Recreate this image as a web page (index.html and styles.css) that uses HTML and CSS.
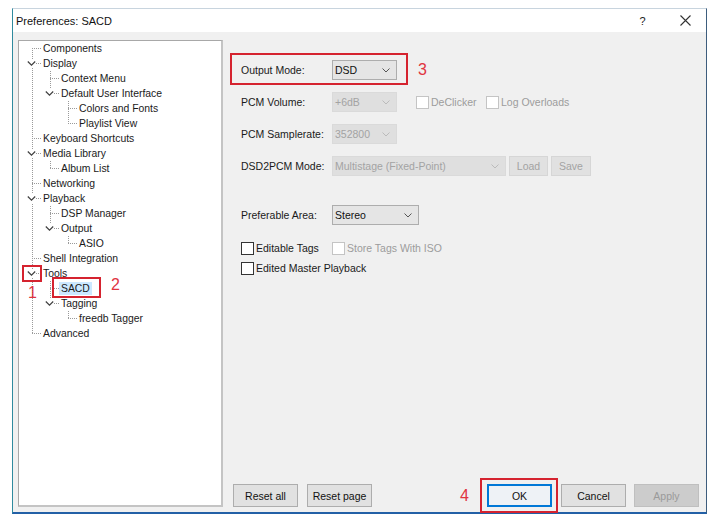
FILE: index.html
```html
<!DOCTYPE html>
<html>
<head>
<meta charset="utf-8">
<link rel="stylesheet" href="styles.css">
</head>
<body>
<div class="window">
  <div class="titlebar">
    <span class="title">Preferences: SACD</span>
    <span class="tb help">?</span>
    <span class="tb close"><svg width="11" height="11" viewBox="0 0 11 11"><path d="M0.5 0.5 L10.5 10.5 M10.5 0.5 L0.5 10.5" stroke="#333" stroke-width="1.1" fill="none"/></svg></span>
  </div>
  <div class="client">
    <div class="tree">
      <svg class="lines" width="203" height="465" viewBox="0 0 203 465">
        <g stroke="#9a9a9a" stroke-width="1" stroke-dasharray="1 1" fill="none">
          <path d="M13.5 7 V293"/>
          <path d="M13 7.5 H22 M13 22.5 H22 M13 97.5 H22 M13 112.5 H22 M13 142.5 H22 M13 157.5 H22 M13 217.5 H22 M13 232.5 H22 M13 292.5 H22"/>
          <path d="M31.5 30 V53 M31.5 120 V128 M31.5 165 V188 M31.5 240 V263"/>
          <path d="M31 37.5 H40 M31 52.5 H40 M31 127.5 H40 M31 172.5 H40 M31 187.5 H40 M31 247.5 H40 M31 262.5 H40"/>
          <path d="M49.5 60 V83 M49.5 195 V203 M49.5 270 V278"/>
          <path d="M49 67.5 H58 M49 82.5 H58 M49 202.5 H58 M49 277.5 H58"/>
        </g>
      </svg>
      <div class="row l0"><span class="exp"></span><span class="lbl">Components</span></div>
      <div class="row l0"><span class="exp"><svg class="chev" width="9" height="9" viewBox="0 0 9 9"><rect width="9" height="9" fill="#fff"/><polyline points="0.8,2.5 4.5,6.2 8.2,2.5" stroke="#404040" stroke-width="1.2" fill="none"/></svg></span><span class="lbl">Display</span></div>
      <div class="row l1"><span class="exp"></span><span class="lbl">Context Menu</span></div>
      <div class="row l1"><span class="exp"><svg class="chev" width="9" height="9" viewBox="0 0 9 9"><rect width="9" height="9" fill="#fff"/><polyline points="0.8,2.5 4.5,6.2 8.2,2.5" stroke="#404040" stroke-width="1.2" fill="none"/></svg></span><span class="lbl">Default User Interface</span></div>
      <div class="row l2"><span class="exp"></span><span class="lbl">Colors and Fonts</span></div>
      <div class="row l2"><span class="exp"></span><span class="lbl">Playlist View</span></div>
      <div class="row l0"><span class="exp"></span><span class="lbl">Keyboard Shortcuts</span></div>
      <div class="row l0"><span class="exp"><svg class="chev" width="9" height="9" viewBox="0 0 9 9"><rect width="9" height="9" fill="#fff"/><polyline points="0.8,2.5 4.5,6.2 8.2,2.5" stroke="#404040" stroke-width="1.2" fill="none"/></svg></span><span class="lbl">Media Library</span></div>
      <div class="row l1"><span class="exp"></span><span class="lbl">Album List</span></div>
      <div class="row l0"><span class="exp"></span><span class="lbl">Networking</span></div>
      <div class="row l0"><span class="exp"><svg class="chev" width="9" height="9" viewBox="0 0 9 9"><rect width="9" height="9" fill="#fff"/><polyline points="0.8,2.5 4.5,6.2 8.2,2.5" stroke="#404040" stroke-width="1.2" fill="none"/></svg></span><span class="lbl">Playback</span></div>
      <div class="row l1"><span class="exp"></span><span class="lbl">DSP Manager</span></div>
      <div class="row l1"><span class="exp"><svg class="chev" width="9" height="9" viewBox="0 0 9 9"><rect width="9" height="9" fill="#fff"/><polyline points="0.8,2.5 4.5,6.2 8.2,2.5" stroke="#404040" stroke-width="1.2" fill="none"/></svg></span><span class="lbl">Output</span></div>
      <div class="row l2"><span class="exp"></span><span class="lbl">ASIO</span></div>
      <div class="row l0"><span class="exp"></span><span class="lbl">Shell Integration</span></div>
      <div class="row l0"><span class="exp"><svg class="chev" width="9" height="9" viewBox="0 0 9 9"><rect width="9" height="9" fill="#fff"/><polyline points="0.8,2.5 4.5,6.2 8.2,2.5" stroke="#404040" stroke-width="1.2" fill="none"/></svg></span><span class="lbl">Tools</span></div>
      <div class="row l1"><span class="exp"></span><span class="lbl sel">SACD</span></div>
      <div class="row l1"><span class="exp"><svg class="chev" width="9" height="9" viewBox="0 0 9 9"><rect width="9" height="9" fill="#fff"/><polyline points="0.8,2.5 4.5,6.2 8.2,2.5" stroke="#404040" stroke-width="1.2" fill="none"/></svg></span><span class="lbl">Tagging</span></div>
      <div class="row l2"><span class="exp"></span><span class="lbl">freedb Tagger</span></div>
      <div class="row l0"><span class="exp"></span><span class="lbl">Advanced</span></div>
    </div>
    <div class="panel">
      <div class="form">
        <div class="frow r1">
          <span class="flabel">Output Mode:</span>
          <div class="combo w65"><span>DSD</span><svg width="8" height="5" viewBox="0 0 8 5"><polyline points="0.5,0.5 4,4 7.5,0.5" stroke="#555" stroke-width="1" fill="none"/></svg></div>
        </div>
        <div class="frow r2">
          <span class="flabel">PCM Volume:</span>
          <div class="combo w65 dis"><span>+6dB</span><svg width="8" height="5" viewBox="0 0 8 5"><polyline points="0.5,0.5 4,4 7.5,0.5" stroke="#bbb" stroke-width="1" fill="none"/></svg></div>
          <label class="chk dis g1"><span class="box"></span><span>DeClicker</span></label>
          <label class="chk dis"><span class="box"></span><span>Log Overloads</span></label>
        </div>
        <div class="frow r3">
          <span class="flabel">PCM Samplerate:</span>
          <div class="combo w65 dis"><span>352800</span><svg width="8" height="5" viewBox="0 0 8 5"><polyline points="0.5,0.5 4,4 7.5,0.5" stroke="#bbb" stroke-width="1" fill="none"/></svg></div>
        </div>
        <div class="frow r4">
          <span class="flabel">DSD2PCM Mode:</span>
          <div class="combo w174 dis"><span>Multistage (Fixed-Point)</span><svg width="8" height="5" viewBox="0 0 8 5"><polyline points="0.5,0.5 4,4 7.5,0.5" stroke="#bbb" stroke-width="1" fill="none"/></svg></div>
          <span class="sbtn dis b1">Load</span>
          <span class="sbtn dis b2">Save</span>
        </div>
        <div class="frow r5">
          <span class="flabel">Preferable Area:</span>
          <div class="combo w87"><span>Stereo</span><svg width="8" height="5" viewBox="0 0 8 5"><polyline points="0.5,0.5 4,4 7.5,0.5" stroke="#555" stroke-width="1" fill="none"/></svg></div>
        </div>
        <div class="frow crow r6">
          <label class="chk first"><span class="box"></span><span>Editable Tags</span></label>
          <label class="chk dis"><span class="box"></span><span>Store Tags With ISO</span></label>
        </div>
        <div class="frow crow r7">
          <label class="chk"><span class="box"></span><span>Edited Master Playback</span></label>
        </div>
      </div>
      <div class="buttons">
        <span class="btn reset1">Reset all</span>
        <span class="btn reset2">Reset page</span>
        <span class="btn ok">OK</span>
        <span class="btn cancel">Cancel</span>
        <span class="btn apply dis">Apply</span>
      </div>
    </div>
  </div>
  <div class="mark box-tools"></div>
  <div class="num n1">1</div>
  <div class="mark box-sacd"></div>
  <div class="num n2">2</div>
  <div class="mark box-mode"></div>
  <div class="num n3">3</div>
  <div class="mark box-ok"></div>
  <div class="num n4">4</div>
</div>
</body>
</html>
```
FILE: styles.css
```css
html, body {
  margin: 0;
  padding: 0;
  background: #ffffff;
}
body {
  font-family: "Liberation Sans", Arial, sans-serif;
  color: #1a1a1a;
}
.window {
  position: relative;
  box-sizing: border-box;
  margin: 8px 0 0 12px;
  width: 695px;
  height: 506px;
  background: #f0f0f0;
  border-left: 1px solid #2f8a9e;
  border-right: 1px solid #3d5d7d;
  border-top: 1px solid #c8d4de;
  border-bottom: 2px solid #2360a6;
  display: flex;
  flex-direction: column;
}
.titlebar {
  height: 23px;
  background: #ffffff;
  display: flex;
  align-items: center;
  font-size: 11px;
  color: #111;
}
.title {
  padding-left: 3px;
  flex: 1;
}
.tb {
  display: flex;
  align-items: center;
  justify-content: center;
  height: 23px;
}
.help {
  width: 43px;
  font-size: 11px;
  color: #222;
}
.close {
  width: 42px;
}
.client {
  flex: 1;
  display: flex;
  padding: 8px 0 5px 5px;
  gap: 7px;
}
.tree {
  position: relative;
  box-sizing: border-box;
  width: 205px;
  background: #ffffff;
  border-top: 1px solid #a8a8a8;
  border-left: 1px solid #a8a8a8;
  border-right: 2px solid #c4c4c4;
  border-bottom: 2px solid #c4c4c4;
  font-size: 10.4px;
  color: #1a1a1a;
}
.lines {
  position: absolute;
  left: 0;
  top: 0;
}
.row {
  position: relative;
  height: 15px;
  display: flex;
  align-items: center;
}
.row.l1 { padding-left: 18px; }
.row.l2 { padding-left: 36px; }
.exp {
  width: 22px;
  height: 15px;
  display: flex;
  align-items: center;
  flex-shrink: 0;
}
.chev {
  margin-left: 8px;
  display: block;
}
.lbl {
  padding: 0 2px;
  line-height: 13px;
  height: 13px;
  white-space: nowrap;
}
.lbl.sel {
  background: #cce8ff;
}
.panel {
  flex: 1;
  display: flex;
  flex-direction: column;
  padding-right: 7px;
}
.form {
  flex: 1;
  font-size: 10.5px;
}
.frow {
  display: flex;
  align-items: center;
  height: 20px;
  padding-left: 11px;
}
.r1 { margin-top: 20px; }
.r2 { margin-top: 12px; }
.r3 { margin-top: 12px; }
.r4 { margin-top: 12px; }
.r5 { margin-top: 29px; }
.r6 { margin-top: 15px; height: 16px; }
.r7 { margin-top: 4px; height: 16px; }
.flabel {
  width: 91px;
  white-space: nowrap;
}
.combo {
  box-sizing: border-box;
  height: 20px;
  display: flex;
  align-items: center;
  justify-content: space-between;
  padding: 0 6px 0 2px;
  background: #e5e5e5;
  border: 1px solid #adadad;
  color: #111;
  white-space: nowrap;
}
.combo.dis {
  background: #dfdfdf;
  border-color: #dadada;
  color: #a3a3a3;
}
.w65 { width: 65px; }
.w87 { width: 87px; }
.w174 { width: 174px; }
.chk {
  display: flex;
  align-items: center;
  gap: 2px;
  white-space: nowrap;
}
.chk .box {
  box-sizing: border-box;
  width: 13px;
  height: 13px;
  background: #ffffff;
  border: 1px solid #333333;
}
.chk.dis {
  color: #9c9c9c;
}
.chk.dis .box {
  border-color: #c4c4c4;
}
.r2 .chk.g1 {
  margin-left: 19px;
  width: 70px;
}
.r6 .chk.first {
  width: 91px;
}
.sbtn {
  box-sizing: border-box;
  height: 20px;
  display: flex;
  align-items: center;
  justify-content: center;
  background: #e1e1e1;
  border: 1px solid #d6d6d6;
  color: #a3a3a3;
}
.b1 { margin-left: 3px; width: 39px; }
.b2 { margin-left: 3px; width: 40px; }
.buttons {
  display: flex;
  height: 23px;
  font-size: 10.5px;
}
.btn {
  box-sizing: border-box;
  width: 65px;
  height: 23px;
  display: flex;
  align-items: center;
  justify-content: center;
  background: #e1e1e1;
  border: 1px solid #adadad;
  color: #111;
}
.reset1 { margin-left: 3px; }
.reset2 { margin-left: 9px; }
.ok {
  margin-left: auto;
  background: #eef2f6;
  border: 1px solid #0078d7;
  box-shadow: inset 0 0 0 1px #0078d7;
}
.cancel { margin-left: 9px; }
.apply { margin-left: 8px; }
.btn.dis {
  background: #cccccc;
  border-color: #bfbfbf;
  color: #9a9a9a;
}
.mark {
  position: absolute;
  box-sizing: border-box;
  border: 2px solid #d5232f;
}
.num {
  position: absolute;
  font-size: 16px;
  line-height: 16px;
  color: #e0343f;
}
.box-tools { left: 9px; top: 256px; width: 20px; height: 17px; }
.n1 { left: 15px; top: 276px; }
.box-sacd { left: 39px; top: 268px; width: 49px; height: 21px; }
.n2 { left: 98px; top: 268px; }
.box-mode { left: 217px; top: 44px; width: 178px; height: 32px; }
.n3 { left: 405px; top: 53px; }
.box-ok { left: 467px; top: 469px; width: 78px; height: 35px; }
.n4 { left: 447px; top: 479px; }
```
